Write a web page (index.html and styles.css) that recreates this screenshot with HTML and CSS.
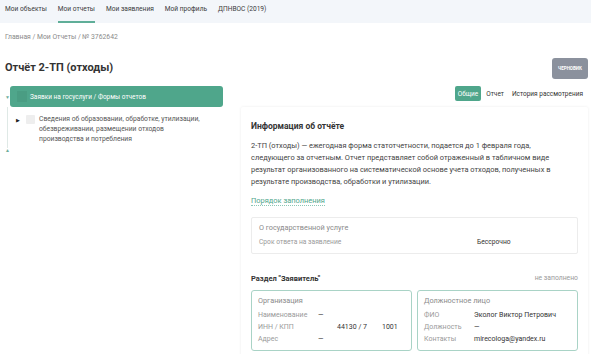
FILE: index.html
```html
<!DOCTYPE html>
<html lang="ru">
<head>
    <meta charset="UTF-8">
    <meta name="viewport" content="width=device-width, initial-scale=1.0">
    <title>Отчёт 2-ТП (отходы)</title>
    <link rel="stylesheet" href="styles.css">
</head>
<body>
  <nav class="topnav">
    <a class="nav-item">Мои объекты</a>
    <a class="nav-item active">Мои отчеты</a>
    <a class="nav-item">Мои заявления</a>
    <a class="nav-item">Мой профиль</a>
    <a class="nav-item">ДПНВОС (2019)</a>
  </nav>

  <div class="page">
    <div class="breadcrumb">Главная / Мои Отчеты / № 3762642</div>

    <div class="title-row">
      <h1>Отчёт 2-ТП (отходы)</h1>
      <span class="status">ЧЕРНОВИК</span>
    </div>

    <div class="content">
      <div class="tree">
        <div class="tree-root">
          <span class="toggle-down">&#9660;</span>
          <div class="root-bar">
            <span class="root-check"></span>
            <span>Заявки на госуслуги / Формы отчетов</span>
          </div>
        </div>
        <div class="tree-children">
          <div class="tree-node">
            <span class="toggle-right">&#9654;</span>
            <span class="node-check"></span>
            <span class="node-text">Сведения об образовании, обработке, утилизации, обезвреживании, размещении отходов производства и потребления</span>
          </div>
        </div>
        <span class="toggle-up">&#9650;</span>
      </div>

      <div class="details">
        <div class="tabs">
          <button class="tab active">Общие</button>
          <button class="tab">Отчет</button>
          <button class="tab">История рассмотрения</button>
        </div>

        <div class="card">
          <h2>Информация об отчёте</h2>
          <p class="about">2-ТП (отходы) — ежегодная форма статотчетности, подается до 1 февраля года,<br>следующего за отчетным. Отчет представляет собой отраженный в табличном виде результат организованного на систематической основе учета отходов, полученных в результате производства, обработки и утилизации.</p>
          <a class="doc-link">Порядок заполнения</a>

          <div class="service">
            <div class="box-title">О государственной услуге</div>
            <div class="service-row">
              <span class="label">Срок ответа на заявление</span>
              <span class="value">Бессрочно</span>
            </div>
          </div>

          <div class="section-head">
            <span class="section-title">Раздел "Заявитель"</span>
            <span class="section-state">не заполнено</span>
          </div>

          <div class="applicant">
            <div class="info-box">
              <div class="box-title">Организация</div>
              <div class="info-row"><span class="label">Наименование</span><span class="value">—</span></div>
              <div class="info-row"><span class="label">ИНН / КПП</span><span class="value inn">44130 / 7</span><span class="value">1001</span></div>
              <div class="info-row"><span class="label">Адрес</span><span class="value">—</span></div>
            </div>
            <div class="info-box">
              <div class="box-title">Должностное лицо</div>
              <div class="info-row"><span class="label">ФИО</span><span class="value">Эколог Виктор Петрович</span></div>
              <div class="info-row"><span class="label">Должность</span><span class="value">—</span></div>
              <div class="info-row"><span class="label">Контакты</span><span class="value">mirecologa@yandex.ru</span></div>
            </div>
          </div>
        </div>
      </div>
    </div>
  </div>
</body>
</html>
```

FILE: styles.css
```css
body {
  margin: 0;
  font-family: Roboto, "Liberation Sans", sans-serif;
  color: #333;
  background: #fff;
  overflow: hidden;
}
a {
  cursor: pointer;
}
.topnav {
  display: flex;
  height: 23px;
  padding-left: 5px;
  background: #f3f6fa;
}
.nav-item {
  display: flex;
  align-items: center;
  margin-right: 11px;
  padding-bottom: 3px;
  font-size: 6.6px;
  color: #3a3a3a;
  border-bottom: 2px solid transparent;
  box-sizing: border-box;
}
.nav-item.active {
  border-bottom-color: #5fae98;
}
.page {
  padding: 0 3px 0 5px;
}
.breadcrumb {
  margin-top: 10px;
  font-size: 6.8px;
  color: #8a8a8a;
  line-height: 8px;
}
.title-row {
  display: flex;
  justify-content: space-between;
  align-items: flex-start;
  margin-top: 17px;
}
h1 {
  margin: 3px 0 0;
  font-size: 11px;
  line-height: 14px;
  font-weight: 700;
  color: #333;
}
.status {
  display: flex;
  align-items: center;
  justify-content: center;
  width: 36px;
  height: 21px;
  border-radius: 3px;
  background: #8b919d;
  color: #fff;
  font-size: 4.5px;
  font-weight: 700;
}
.content {
  display: flex;
  margin-top: 7px;
}
.tree {
  width: 218px;
  flex-shrink: 0;
}
.tree-root {
  display: flex;
  align-items: center;
}
.toggle-down, .toggle-up {
  font-size: 5px;
  color: #6fae9c;
  width: 5px;
}
.toggle-up {
  display: block;
  line-height: 5px;
}
.root-bar {
  display: flex;
  align-items: center;
  height: 21px;
  flex: 1;
  padding-left: 7px;
  border-radius: 3px;
  background: #4fa68b;
  color: #fff;
  font-size: 6.5px;
}
.root-check {
  width: 10px;
  height: 11px;
  margin-right: 3px;
  background: rgba(0, 0, 0, 0.05);
}
.tree-children {
  margin-left: 2px;
  padding: 8px 0 4px 8px;
  border-left: 1px solid #dfe9e6;
}
.tree-node {
  display: flex;
  align-items: flex-start;
}
.toggle-right {
  width: 10px;
  margin-top: 2px;
  font-size: 5px;
  color: #222;
}
.node-check {
  width: 9px;
  height: 9px;
  margin-right: 4px;
  background: #eee;
  border-radius: 1px;
  flex-shrink: 0;
}
.node-text {
  width: 168px;
  font-size: 6.75px;
  line-height: 10px;
  color: #555;
  margin-top: -1px;
}
.details {
  flex: 1;
  margin-left: 18px;
}
.tabs {
  display: flex;
  justify-content: flex-end;
  align-items: center;
  gap: 2px;
  height: 15px;
  padding-right: 2px;
}
.tab {
  height: 15px;
  padding: 0 3px;
  border: none;
  border-radius: 2px;
  background: none;
  font-family: inherit;
  font-size: 6.5px;
  color: #333;
}
.tab.active {
  background: #4fa68b;
  color: #fff;
}
.card {
  margin-top: 6px;
  padding: 13px 10px 10px;
  background: #fff;
  box-shadow: 0 0 3px rgba(0, 0, 0, 0.08);
  border-radius: 2px;
}
h2 {
  margin: 0;
  font-size: 8.5px;
  font-weight: 700;
  color: #333;
  line-height: 12px;
}
.about {
  margin: 8px 0 0;
  font-size: 7.45px;
  line-height: 12px;
  color: #444;
}
.doc-link {
  display: inline-block;
  margin-top: 4px;
  font-size: 7.45px;
  line-height: 9px;
  color: #4fa68b;
  border-bottom: 1px dotted #8cc6b4;
}
.service {
  margin-top: 10px;
  padding: 5px 7px 6px;
  border: 1px solid #ececec;
  border-radius: 2px;
}
.box-title {
  font-size: 7.3px;
  line-height: 9px;
  color: #8a8a8a;
}
.service-row {
  display: flex;
  margin-top: 6px;
  font-size: 6.7px;
  line-height: 9px;
}
.service-row .label {
  width: 218px;
}
.label {
  color: #9a9a9a;
}
.value {
  color: #333;
}
.section-head {
  display: flex;
  justify-content: space-between;
  margin-top: 20px;
  font-size: 7.5px;
  line-height: 9px;
}
.section-title {
  font-weight: 700;
  color: #333;
}
.section-state {
  color: #9a9a9a;
  font-size: 6.8px;
}
.applicant {
  display: flex;
  gap: 5px;
  margin-top: 7px;
}
.info-box {
  flex: 1;
  padding: 5px 6px 5px;
  border: 1px solid #a9d3c6;
  border-radius: 3px;
}
.info-row {
  display: flex;
  font-size: 7px;
  line-height: 12px;
}
.info-box .box-title {
  margin-bottom: 4px;
}
.info-row .label {
  width: 60px;
}
.info-box + .info-box .info-row .label {
  width: 50px;
}
.value.inn {
  margin-left: 19px;
  width: 45px;
}
```
